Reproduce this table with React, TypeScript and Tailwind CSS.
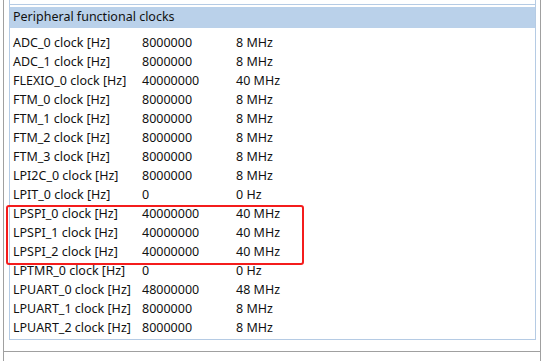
const rows: [string, string, string][] = [
  ['ADC_0 clock [Hz]', '8000000', '8 MHz'],
  ['ADC_1 clock [Hz]', '8000000', '8 MHz'],
  ['FLEXIO_0 clock [Hz]', '40000000', '40 MHz'],
  ['FTM_0 clock [Hz]', '8000000', '8 MHz'],
  ['FTM_1 clock [Hz]', '8000000', '8 MHz'],
  ['FTM_2 clock [Hz]', '8000000', '8 MHz'],
  ['FTM_3 clock [Hz]', '8000000', '8 MHz'],
  ['LPI2C_0 clock [Hz]', '8000000', '8 MHz'],
  ['LPIT_0 clock [Hz]', '0', '0 Hz'],
  ['LPSPI_0 clock [Hz]', '40000000', '40 MHz'],
  ['LPSPI_1 clock [Hz]', '40000000', '40 MHz'],
  ['LPSPI_2 clock [Hz]', '40000000', '40 MHz'],
  ['LPTMR_0 clock [Hz]', '0', '0 Hz'],
  ['LPUART_0 clock [Hz]', '48000000', '48 MHz'],
  ['LPUART_1 clock [Hz]', '8000000', '8 MHz'],
  ['LPUART_2 clock [Hz]', '8000000', '8 MHz'],
];

export default function App() {
  return (
    <div
      className="relative w-[547px] h-[361px] overflow-hidden bg-white text-[#111] text-[12.5px]"
      style={{ fontFamily: '"Noto Sans", "Noto Sans CJK SC", sans-serif' }}
    >
      {/* scroll pane */}
      <div className="ml-[3px] w-[538px] h-[361px] border-x border-[#a0a0a0]">
        <div className="h-[352px] border-b border-[#a0a0a0]">
          <div className="ml-[5px] w-[527px] h-[340px] border-x border-b border-[#b5cbe4]">
            <div className="h-[5px] border-b border-[#b5cbe4]" />
            <div className="mt-[2px] h-[21px] bg-[#bad1ea] pl-[3px] flex items-center">
              Peripheral functional clocks
            </div>
            <div className="pt-[6px]">
              {rows.map(([name, hz, pretty]) => (
                <div key={name} className="h-[19px] flex items-center pl-[3px]">
                  <span className="w-[129px] whitespace-nowrap">{name}</span>
                  <span className="w-[94px]">{hz}</span>
                  <span>{pretty}</span>
                </div>
              ))}
            </div>
          </div>
        </div>
      </div>

      {/* highlight around the LPSPI rows */}
      <div className="absolute left-[6px] top-[205px] w-[298px] h-[60px] border-2 border-[#f41c1c] rounded-[3px]" />
    </div>
  );
}
